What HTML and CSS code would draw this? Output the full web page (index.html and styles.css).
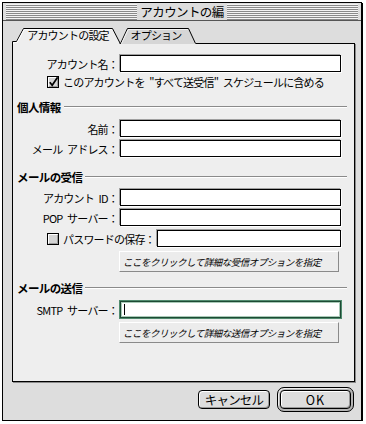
FILE: index.html
```html
<!DOCTYPE html>
<html lang="ja">
<head>
    <meta charset="UTF-8">
    <meta name="viewport" content="width=device-width, initial-scale=1.0">
    <title>アカウントの編集</title>
    <link rel="stylesheet" href="styles.css">
</head>
<body>
    <div class="window">
        <div class="titlebar">
            <div class="stripes"></div>
            <div class="title">アカウントの編</div>
            <div class="stripes"></div>
        </div>
        <div class="content">
            <!-- タブ -->
            <svg class="tabs" width="200" height="17" viewBox="0 0 200 17">
                <polygon points="108,17 115,1 177,1 184,17" fill="#d6d6d6"/>
                <polyline points="108.5,16.5 115.5,1.5 176.5,1.5 183.5,16.5" fill="none" stroke="#000"/>
                <polyline points="109.5,16.5 116.2,2.5 176,2.5" fill="none" stroke="#f4f4f4"/>
                <polygon points="0,17 0,14 4,14 11,1 100,1 108,17" fill="#eeeeee"/>
                <polyline points="0.5,17 0.5,14.5 4.5,14.5 11.5,1.5 100.5,1.5 108.5,17" fill="none" stroke="#000"/>
                <polyline points="1.5,17 1.5,15.5 5.2,15.5 12.2,2.5 100,2.5" fill="none" stroke="#fff"/>
                <text class="tab-text" x="56" y="12.5" text-anchor="middle">アカウントの設定</text>
                <text class="tab-text" x="144" y="12.5" text-anchor="middle">オプション</text>
            </svg>

            <div class="panel">
                <div class="row first">
                    <label>アカウント名：</label>
                    <div class="field"></div>
                </div>
                <div class="check-row">
                    <svg class="checkbox" width="12" height="12" viewBox="0 0 12 12">
                        <rect x="0.5" y="0.5" width="11" height="11" fill="#d4d4d4" stroke="#000"/>
                        <path d="M1.5 10.5V1.5H10.5" fill="none" stroke="#fff"/>
                        <path d="M2 10.5H10.5V2" fill="none" stroke="#9a9a9a"/>
                        <path d="M2.8 6.2L5.2 9.3L10.6 1.2" fill="none" stroke="#000" stroke-width="1.7"/>
                    </svg>
                    <span>このアカウントを "すべて送受信" スケジュールに含める</span>
                </div>

                <div class="section s1">個人情報</div>
                <div class="row gap6">
                    <label>名前：</label>
                    <div class="field"></div>
                </div>
                <div class="row">
                    <label>メール アドレス：</label>
                    <div class="field"></div>
                </div>

                <div class="section s2">メールの受信</div>
                <div class="row gap5">
                    <label>アカウント ID：</label>
                    <div class="field"></div>
                </div>
                <div class="row">
                    <label>POP サーバー：</label>
                    <div class="field"></div>
                </div>
                <div class="row pw-row">
                    <div class="pw-label">
                        <svg class="checkbox" width="12" height="12" viewBox="0 0 12 12">
                            <rect x="0.5" y="0.5" width="11" height="11" fill="#d4d4d4" stroke="#000"/>
                            <path d="M1.5 10.5V1.5H10.5" fill="none" stroke="#fff"/>
                            <path d="M2 10.5H10.5V2" fill="none" stroke="#9a9a9a"/>
                        </svg>
                        <span>パスワードの保存：</span>
                    </div>
                    <div class="field"></div>
                </div>
                <div class="opt-btn">ここをクリックして詳細な受信オプションを指定</div>

                <div class="section s3">メールの送信</div>
                <div class="row gap6">
                    <label>SMTP サーバー：</label>
                    <div class="field focus"></div>
                </div>
                <div class="opt-btn">ここをクリックして詳細な送信オプションを指定</div>
            </div>

            <div class="buttons">
                <div class="btn cancel">キャンセル</div>
                <div class="default-ring">
                    <div class="btn ok">OK</div>
                </div>
            </div>
        </div>
    </div>
</body>
</html>
```

FILE: styles.css
```css
body {
    margin: 0;
    background-color: #fff;
    font-family: "Noto Sans CJK JP", sans-serif;
    font-size: 11px;
    color: #000;
}
.window {
    margin: 2px 0 0 2px;
    width: 358px;
    height: 417px;
    border: 1px solid #000;
    box-shadow: 1px 1px 0 #000;
    background-color: #dddddd;
}

/* タイトルバー */
.titlebar {
    display: flex;
    align-items: center;
    height: 18px;
    padding: 1px 3px;
    box-sizing: border-box;
    border-bottom: 1px solid #555;
    background-color: #dddddd;
}
.stripes {
    flex: 1;
    height: 16px;
    background: repeating-linear-gradient(to bottom, #f4f4f4 0 1px, #8a8a8a 1px 2px);
}
.title {
    padding: 0 3px;
    font-size: 12.5px;
    letter-spacing: -0.6px;
    line-height: 16px;
}

.content {
    padding: 6px 5px 0 9px;
}

/* タブ */
.tabs {
    display: block;
    position: relative;
    z-index: 1;
    margin-bottom: -1px;
}
.tab-text {
    font-size: 11px;
    letter-spacing: -0.8px;
}

.panel {
    width: 343px;
    height: 339px;
    box-sizing: border-box;
    padding: 11px 7px 0 4px;
    border: 1px solid #000;
    background-color: #eeeeee;
    box-shadow: 1px 1px 0 #8a8a8a;
}

.row {
    display: flex;
    align-items: center;
    height: 17px;
    margin-top: 3px;
    letter-spacing: -0.8px;
    word-spacing: 3px;
}
.row.first {
    margin-top: 0;
}
.row.gap5 {
    margin-top: 5px;
}
.row.gap6 {
    margin-top: 6px;
}
.row label {
    width: 103px;
    padding-right: 2px;
    box-sizing: border-box;
    text-align: right;
    white-space: nowrap;
}
.field {
    flex: 1;
    display: flex;
    align-items: center;
    height: 17px;
    margin-right: 6px;
    box-sizing: border-box;
    border: 1px solid #000;
    background-color: #fff;
    box-shadow: -1px -1px 0 #a0a0a0, 1px 1px 0 #fff;
}
.field.focus {
    border-color: #1d4a34;
    box-shadow: 0 0 0 1px #4f8a6d, inset 0 0 0 1px #a9cbb8;
}
.field.focus::before {
    content: "";
    width: 1px;
    height: 11px;
    margin-left: 3px;
    background-color: #000;
}

.check-row {
    display: flex;
    align-items: center;
    gap: 4px;
    height: 14px;
    margin-top: 3px;
    padding-left: 30px;
    letter-spacing: -0.8px;
    word-spacing: 3px;
    white-space: nowrap;
}
.checkbox {
    display: block;
    flex: none;
}
.pw-row {
    margin-top: 4px;
    padding-left: 30px;
}
.pw-label {
    display: flex;
    align-items: center;
    gap: 4px;
    width: 110px;
    white-space: nowrap;
}

/* セクション見出し */
.section {
    display: flex;
    align-items: center;
    height: 14px;
    font-size: 11.5px;
    font-weight: bold;
    letter-spacing: -0.6px;
}
.section::after {
    content: "";
    flex: 1;
    margin-left: 3px;
    border-top: 1px solid #8a8a8a;
    border-bottom: 1px solid #fff;
}
.section.s1 {
    margin-top: 11px;
}
.section.s2 {
    margin-top: 13px;
}
.section.s3 {
    margin-top: 9px;
}

.opt-btn {
    display: flex;
    align-items: center;
    width: 220px;
    height: 21px;
    margin: 4px 0 0 102px;
    padding-left: 3px;
    box-sizing: border-box;
    border: 1px solid;
    border-color: #fff #8a8a8a #8a8a8a #fff;
    background-color: #ececec;
    font-size: 9.5px;
    letter-spacing: -0.5px;
    font-style: italic;
    white-space: nowrap;
}

/* ボタン */
.buttons {
    display: flex;
    justify-content: flex-end;
    align-items: center;
    gap: 7px;
    margin: 5px 2px 0 0;
}
.btn {
    display: flex;
    align-items: center;
    justify-content: center;
    box-sizing: border-box;
    border: 1px solid #000;
    background-color: #dddddd;
    box-shadow: inset 1px 1px 0 #fff, inset -1px -1px 0 #999;
    font-size: 12.5px;
}
.cancel {
    width: 72px;
    height: 19px;
    border-radius: 4px;
    letter-spacing: -0.8px;
}
.default-ring {
    width: 77px;
    height: 25px;
    box-sizing: border-box;
    padding: 2px;
    border: 1px solid #000;
    border-radius: 7px;
    background-color: #b4b4b4;
    box-shadow: inset 1px 1px 0 #eee;
}
.ok {
    height: 100%;
    border-radius: 4px;
    letter-spacing: 1px;
}
```
